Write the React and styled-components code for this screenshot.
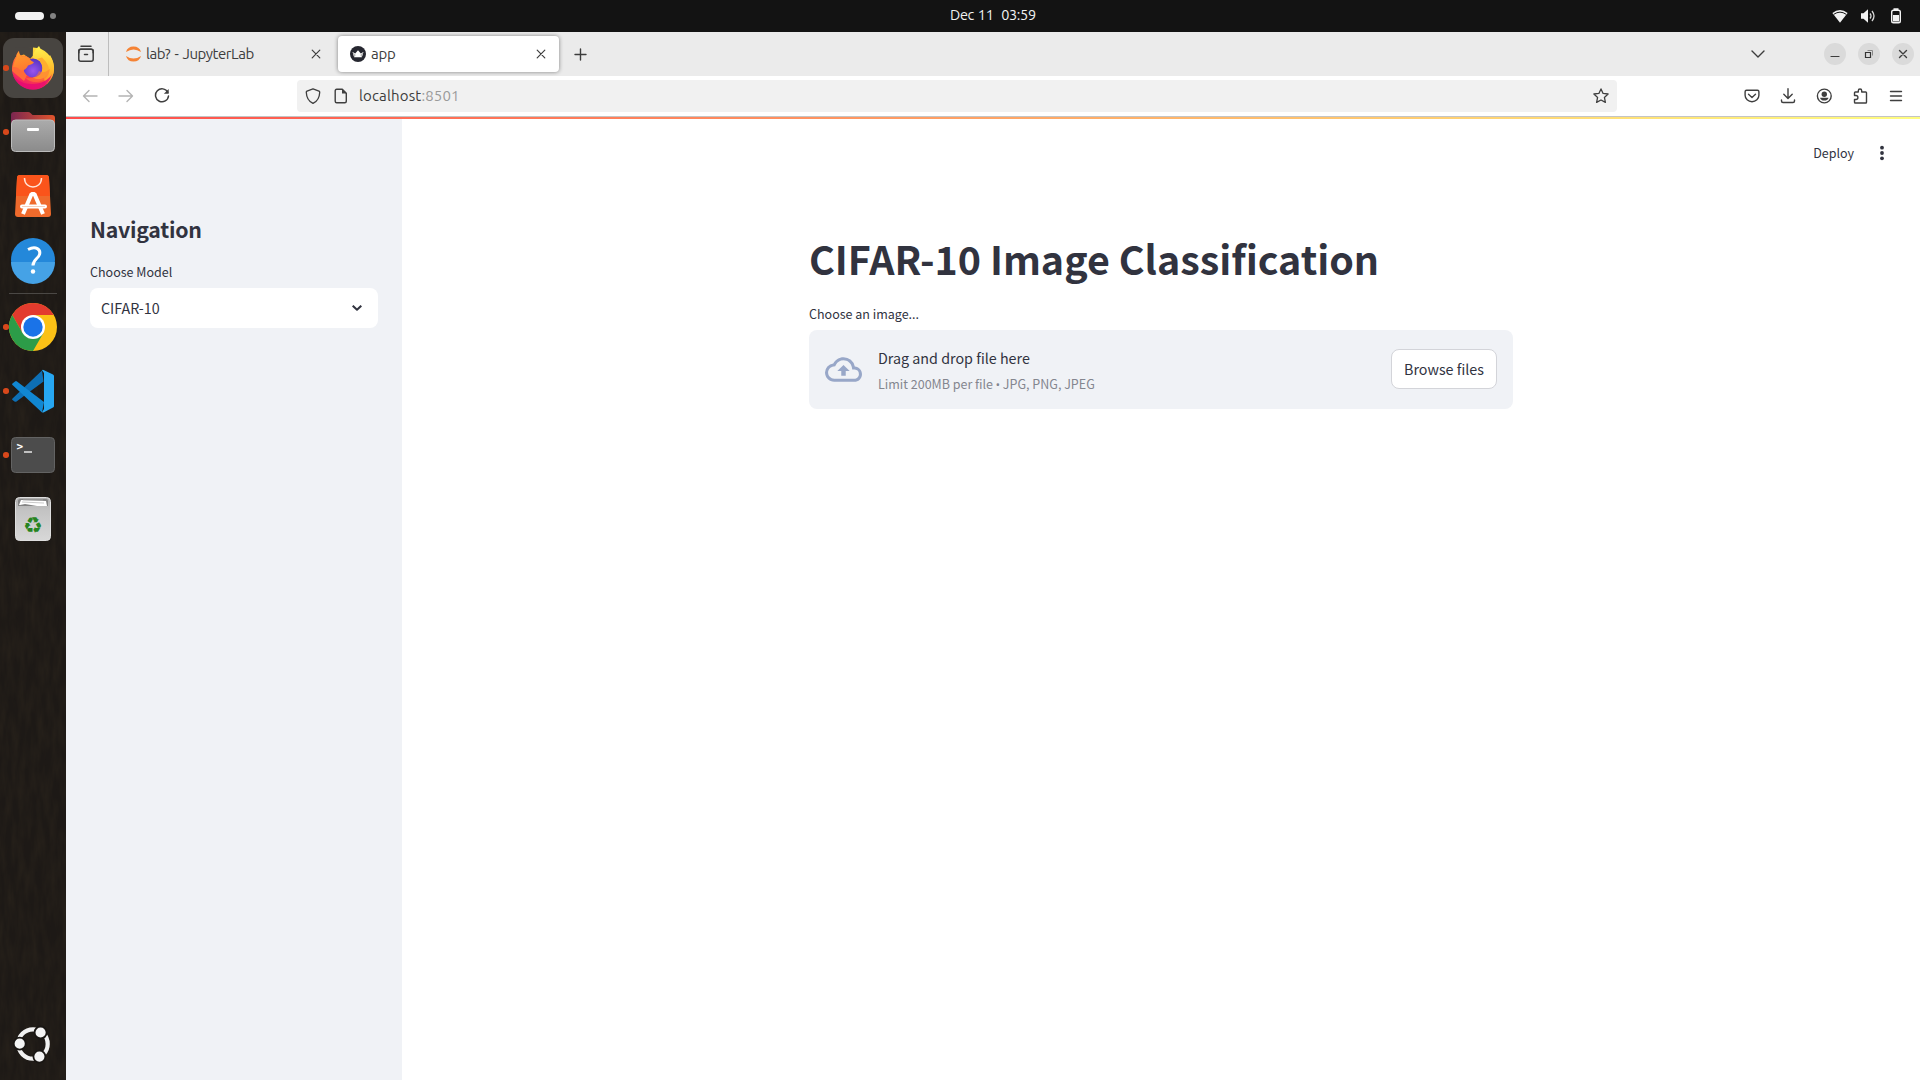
import React from "react";
import styled, { createGlobalStyle } from "styled-components";

const GlobalStyle = createGlobalStyle`
  *, *::before, *::after { box-sizing: border-box; }
  html, body { margin: 0; padding: 0; overflow: hidden; background: #fff; }
  svg { display: block; flex: none; }
  button { margin: 0; padding: 0; border: 0; background: none; color: inherit; font: inherit; }
`;

const uiFont = `"Ubuntu", "Noto Sans", "Open Sans", sans-serif`;
const pageFont = `"Source Sans Pro", "Noto Sans CJK SC", "Noto Sans", sans-serif`;

const Desktop = styled.div`
  width: 1920px;
  height: 1080px;
  display: flex;
  flex-direction: column;
  font-family: ${uiFont};
`;

/* ---------- system panel ---------- */
const Panel = styled.header`
  height: 32px;
  flex: none;
  background: #131313;
  color: #f2f2f2;
  display: grid;
  grid-template-columns: 950px 1fr auto;
  align-items: center;
`;
const Workspaces = styled.div`
  display: flex;
  align-items: center;
  gap: 6px;
  padding-left: 15px;
`;
const Pill = styled.span`
  width: ${(p) => (p.$active ? 29 : 6)}px;
  height: ${(p) => (p.$active ? 8 : 6)}px;
  border-radius: 4px;
  background: ${(p) => (p.$active ? "#f2f2f2" : "#828282")};
`;
const Clock = styled.span`
  font-size: 14.5px;
  line-height: 30px;
  padding-bottom: 2px;
  white-space: pre;
  letter-spacing: -0.35px;
  word-spacing: 0.9px;
`;
const Tray = styled.div`
  display: flex;
  align-items: center;
  gap: 12px;
  padding-right: 16px;
`;

/* ---------- dock ---------- */
const Body = styled.div`
  flex: 1;
  display: flex;
  min-height: 0;
`;
const DockBar = styled.nav`
  position: relative;
  width: 66px;
  flex: none;
  padding: 6px 3px;
  background: #1d1916;
  display: flex;
  flex-direction: column;
  overflow: hidden;
`;
const Grain = styled.svg`
  position: absolute;
  inset: 0;
  width: 66px;
  height: 1048px;
`;
const Slot = styled.div`
  position: relative;
  width: 60px;
  height: 60px;
  flex: none;
  margin-bottom: ${(p) => (p.$last ? 0 : 4)}px;
  margin-top: ${(p) => (p.$last ? "auto" : 0)};
  border-radius: 11px;
  background: ${(p) => (p.$active ? "#484541" : "transparent")};
  &::before {
    content: "";
    display: ${(p) => (p.$running ? "block" : "none")};
    position: absolute;
    left: 0;
    top: 27px;
    width: 5.5px;
    height: 5.5px;
    border-radius: 50%;
    background: #d8481b;
  }
`;
const DockRule = styled.hr`
  position: relative;
  width: 48px;
  height: 1px;
  flex: none;
  margin: -1px 6px 3px;
  border: 0;
  background: #4b4845;
`;

/* ---------- browser ---------- */
const Browser = styled.section`
  flex: 1;
  display: flex;
  flex-direction: column;
  min-width: 0;
`;
const TabStrip = styled.div`
  height: 44px;
  flex: none;
  background: #ebebeb;
  display: flex;
  align-items: center;
  color: #3d3d3d;
`;
const Overview = styled.div`
  width: 43px;
  height: 44px;
  flex: none;
  display: flex;
  align-items: center;
  padding-left: 11px;
  border-right: 1px solid #bdbdbd;
`;
const Tab = styled.div`
  width: 221px;
  height: 36px;
  margin-left: 4px;
  padding: 0 13px 0 12px;
  display: flex;
  align-items: center;
  border-radius: 4px;
  background: ${(p) => (p.$active ? "#fff" : "transparent")};
  box-shadow: ${(p) => (p.$active ? "0 0 4px rgba(0,0,0,0.45)" : "none")};
`;
const TabTitle = styled.span`
  flex: 1;
  margin-left: ${(p) => p.$gap}px;
  font-size: 15px;
  line-height: 20px;
  letter-spacing: ${(p) => p.$track}px;
  word-spacing: 1.2px;
  white-space: nowrap;
`;
const NewTab = styled.button`
  margin-left: 15px;
  height: 13px;
`;
const WindowControls = styled.div`
  margin-left: auto;
  display: flex;
  align-items: center;
  gap: 12px;
  padding-right: 6px;
`;
const ListTabs = styled.button`
  margin-right: 47px;
`;
const RoundButton = styled.button`
  width: 22px;
  height: 22px;
  border-radius: 50%;
  background: #dadada;
  display: grid;
  place-items: center;
`;
const Toolbar = styled.div`
  height: 41px;
  flex: none;
  background: #fff;
  border-bottom: 1px solid #c4c4c4;
  display: flex;
  align-items: center;
  color: #3f3f3f;
`;
const NavButtons = styled.div`
  width: 231px;
  display: flex;
  gap: 20px;
  padding-left: 16px;
`;
const UrlBar = styled.div`
  width: 1320px;
  height: 32px;
  border-radius: 4px;
  background: #f1f1f1;
  display: flex;
  align-items: center;
  gap: 12px;
  padding: 0 8px;
`;
const Address = styled.span`
  flex: 1;
  margin-left: -2px;
  font-size: 15px;
  line-height: 20px;
  letter-spacing: 0.15px;
  color: #3c3c3c;
`;
const Port = styled.span`
  color: #9a9a9a;
`;
const Actions = styled.div`
  margin-left: auto;
  display: flex;
  gap: 20px;
  padding-right: 16px;
`;

/* ---------- page ---------- */
const Rainbow = styled.div`
  height: 2px;
  flex: none;
  background: linear-gradient(90deg, #ff4b4b, #fffd80);
`;
const Page = styled.div`
  flex: 1;
  display: flex;
  min-height: 0;
  font-family: ${pageFont};
  color: #31333f;
`;
const Sidebar = styled.aside`
  width: 336px;
  flex: none;
  background: #f0f2f6;
  padding: 91px 24px 0;
`;
const SideTitle = styled.h2`
  margin: 0;
  font-size: 21.3px;
  font-weight: 700;
  line-height: 38px;
  letter-spacing: -0.25px;
`;
const Label = styled.label`
  display: block;
  font-size: 12.5px;
  line-height: 22px;
  margin-top: ${(p) => p.$top}px;
  white-space: nowrap;
`;
const Select = styled.div`
  height: 40px;
  margin-top: 5px;
  padding: 0 16px 0 11px;
  border-radius: 8px;
  background: #fff;
  display: flex;
  align-items: center;
  justify-content: space-between;
`;
const SelectValue = styled.span`
  font-size: 14.3px;
  padding-bottom: 2px;
`;
const Main = styled.main`
  flex: 1;
  display: flex;
  flex-direction: column;
  align-items: center;
`;
const AppHeader = styled.div`
  align-self: stretch;
  height: 68px;
  display: flex;
  justify-content: flex-end;
  align-items: center;
  gap: 26px;
  padding-right: 36px;
`;
const Deploy = styled.button`
  font-size: 12.5px;
  line-height: 20px;
`;
const Block = styled.div`
  width: 704px;
  padding-top: 43px;
`;
const Title = styled.h1`
  margin: 0;
  font-size: 39.4px;
  font-weight: 700;
  line-height: 56px;
  white-space: nowrap;
`;
const Uploader = styled.div`
  height: 79px;
  margin-top: 5px;
  padding: 0 16px 1px;
  border-radius: 8px;
  background: #f0f2f6;
  display: flex;
  align-items: center;
`;
const DropText = styled.div`
  flex: 1;
  margin-left: 16px;
  padding-top: 3px;
`;
const DropMain = styled.div`
  font-size: 14.3px;
  line-height: 26px;
`;
const DropHint = styled.div`
  margin-top: 1px;
  font-size: 12.5px;
  line-height: 24px;
  color: #84868f;
`;
const Bullet = styled.span`
  font-family: Roboto, sans-serif;
  font-size: 12.5px;
  line-height: 1;
`;
const BrowseButton = styled.button`
  width: 106px;
  height: 40px;
  padding-bottom: 1px;
  border: 1px solid #d3d4d9;
  border-radius: 8px;
  background: #fff;
  font-size: 14.3px;
`;

const Line = ({ w = 16, h = 16, s = 1.4, children, ...rest }) => (
  <svg width={w} height={h} viewBox={`0 0 ${w} ${h}`} fill="none" stroke="currentColor" strokeWidth={s} strokeLinecap="round" strokeLinejoin="round" {...rest}>
    {children}
  </svg>
);
const Close = () => (
  <Line w={10} h={10} s={1.2}><path d="M1.200 1.200l7.600 7.600M8.800 1.200L1.200 8.800" /></Line>
);
const DockSvg = ({ children }) => <svg width="60" height="60" viewBox="0 0 60 60">{children}</svg>;

const Firefox = () => (
  <DockSvg>
    <defs>
      <linearGradient id="ffBody" x1="0.8" y1="0" x2="0.25" y2="1">
        <stop offset="0" stopColor="#fff14a" /><stop offset="0.35" stopColor="#ffb52b" /><stop offset="0.62" stopColor="#ff4f3c" /><stop offset="1" stopColor="#ea0a7b" />
      </linearGradient>
      <radialGradient id="ffGlobe" cx="0.5" cy="0.65" r="0.6">
        <stop offset="0" stopColor="#9a55ef" /><stop offset="1" stopColor="#5b35c5" />
      </radialGradient>
      <linearGradient id="ffHead" x1="0" y1="0" x2="0.3" y2="1">
        <stop offset="0" stopColor="#ffa32c" /><stop offset="1" stopColor="#ff7a30" />
      </linearGradient>
      <linearGradient id="ffTail" x1="0" y1="0" x2="0" y2="1">
        <stop offset="0" stopColor="#fff44f" /><stop offset="0.6" stopColor="#ffbd2d" /><stop offset="1" stopColor="#ff8a2d" />
      </linearGradient>
    </defs>
    <circle cx="30" cy="30.500" r="21" fill="url(#ffBody)" />
    <path d="M36 8c2 5 6 8 9.500 11l1.500-2c3 5 4.500 10 4 15-.5 6-4 11-8 14-4-8-2-14-7-20-3-3-6-5-6.500-8 1-4 3.500-7 6.500-10z" fill="url(#ffTail)" />
    <path d="M29.800 17.800L30 9l-18 1v9l9-2.500 6 4.500z" fill="#484541" />
    <path d="M9 33c0-6 2-10 4-14 0-2 1-4 3-6 0 3 1 4 3 5 4-1 6 1 10 4l-2 9-6 12z" fill="#ff6a38" />
    <circle cx="30" cy="30" r="9.500" fill="url(#ffGlobe)" />
    <path d="M34 21c3 1 5.500 5 5.500 9 0 5-4 9.500-9.500 9.500 7 4 14 0 16-7 0-6-4-10-7-13z" fill="#ffae2d" />
    <path d="M36 33c4 3 8 0 11-2-1 8-7 13-14 13-5 0-9-2-11-5 6 3 12 0 14-6z" fill="#ff7a34" opacity=".55" />
    <path d="M10 29c1-4 2-7 3.500-10 0-2 1-4 2.500-6 0 3 1 4.500 3 5.500 4-1 7 1 9 4l3 2c-2 2-4 2-6 3-1 3-4 5-7 5-3-3-5-4-8-3.500z" fill="url(#ffHead)" />
    <path d="M10 37c4 6 11 9 19 9 9 0 17-4 20-10-3 10-10 15.500-19 15.500S13 46 10 37z" fill="#e60a72" opacity=".85" />
  </DockSvg>
);
const Files = () => (
  <DockSvg>
    <defs>
      <linearGradient id="fTop" x1="0" x2="1"><stop offset="0" stopColor="#7a2650" /><stop offset="1" stopColor="#e2552c" /></linearGradient>
      <linearGradient id="fBody" x1="0" x2="0" y1="0" y2="1"><stop offset="0" stopColor="#ababab" /><stop offset="1" stopColor="#8b8b8b" /></linearGradient>
    </defs>
    <path d="M8 24V13q0-3 3-3h14q1.500 0 2.500 1l2 2H49q3 0 3 3v8z" fill="url(#fTop)" />
    <rect x="8.500" y="18" width="43" height="31.500" rx="4" fill="url(#fBody)" stroke="#bcbcbc" />
    <rect x="24" y="26" width="12" height="3" rx="1" fill="#fff" />
  </DockSvg>
);
const Store = () => (
  <DockSvg>
    <path d="M17 9h26q3 0 3 3l2 36q0 3-3 3H15q-3 0-3-3l2-36q0-3 3-3z" fill="#ef6a2c" />
    <path d="M17 9h26q3 0 3 3l.9 18H13.200L14 12q0-3 3-3z" fill="#fa541b" />
    <path d="M21.500 12c0 12 17 12 17 0" fill="none" stroke="#ffe4d6" strokeWidth="1.500" />
    <path d="M20 48l8.500-20h3L40 48" fill="none" stroke="#fff" strokeWidth="4" strokeLinejoin="bevel" />
    <path d="M19 40.500h23" stroke="#fff" strokeWidth="4" strokeLinecap="round" />
    <path d="M19 40.500h23" stroke="#f4b08e" strokeWidth=".6" />
  </DockSvg>
);
const Help = () => (
  <DockSvg>
    <circle cx="30" cy="30" r="22" fill="#2488da" />
    <path d="M8 32a22 22 0 0 0 44 0z" fill="#45a2e6" />
    <path d="M25 19.500c8-4 13 0 11.500 5-1 4-6.500 5-6.500 11" fill="none" stroke="#fff" strokeWidth="3" />
    <circle cx="30" cy="41.500" r="2.200" fill="#fff" />
  </DockSvg>
);
const Chrome = () => (
  <DockSvg>
    <circle cx="30" cy="30" r="24" fill="#fbc116" />
    <path d="M30 30V18h20.800A24 24 0 0 0 9.200 18L19.600 36z" fill="#e33b2e" />
    <path d="M9.200 18A24 24 0 0 0 30 54l10.400-18L30 30l-10.400 6z" fill="#2c9c48" />
    <circle cx="30" cy="30" r="12" fill="#fff" />
    <circle cx="30" cy="30" r="9.700" fill="#1a73e8" />
  </DockSvg>
);
const Code = () => (
  <DockSvg>
    <path d="M9.500 37.500L39 9.500l1.500 11-27 20q-1 .7-2 0l-2-1.500q-1-.700 0-1.500z" fill="#0d6fb5" />
    <path d="M9.500 22.500l2.500-2q1-.8 2 0L41 41l-2 10.500L9.500 24q-1-.700 0-1.500z" fill="#1187d2" />
    <path d="M39 9.200q.7-.6 1.500-.2L50 13.500q1 .5 1 1.500v30q0 1-1 1.500L40.500 51.500q-.800.300-1.500-.2l2-3.300V12z" fill="#27a7f2" />
  </DockSvg>
);
const PromptText = styled.text`
  font: 700 11px "DejaVu Sans Mono", monospace;
  fill: #fff;
`;
const Terminal = () => (
  <DockSvg>
    <rect x="8.500" y="12.500" width="43" height="35" rx="4" fill="#4c4c4c" stroke="#636363" />
    <PromptText x="13.500" y="24.500">&gt;</PromptText>
    <path d="M21 27h8" stroke="#fff" strokeWidth="1.300" />
  </DockSvg>
);
const RecycleGlyph = styled.text`
  font: 22px "DejaVu Sans", sans-serif;
  fill: #268420;
  text-anchor: middle;
`;
const Trash = () => (
  <DockSvg>
    <defs>
      <linearGradient id="tr" x1="0" x2="0" y1="0" y2="1"><stop offset="0" stopColor="#adadad" /><stop offset=".3" stopColor="#c3c3c3" /><stop offset="1" stopColor="#d8d8d8" /></linearGradient>
    </defs>
    <rect x="12.500" y="8.500" width="35" height="43" rx="4" fill="url(#tr)" stroke="#dedede" />
    <path d="M17 10h26q2 0 2 2v5H15v-5q0-2 2-2z" fill="#848484" />
    <path d="M16 16l2-5 25 1 1 5H34l-12-2-5 1z" fill="#fff" />
    <path d="M19 13l22 1M20 11h20" stroke="#b2b2b2" strokeWidth=".7" />
    <RecycleGlyph x="30" y="43.500">{"\u267B"}</RecycleGlyph>
  </DockSvg>
);
const Ubuntu = () => (
  <DockSvg>
    <circle cx="30" cy="30" r="14.700" fill="none" stroke="#f1f1f1" strokeWidth="4.200" />
    {[[37.6, 18.5], [16.7, 29.7], [36.4, 42.6]].map(([x, y]) => (
      <circle key={y} cx={x} cy={y} r="6" fill="#f4f4f4" stroke="#191613" strokeWidth="1.800" />
    ))}
  </DockSvg>
);

const dockItems = [
  { name: "firefox", Icon: Firefox, active: true, running: true },
  { name: "files", Icon: Files, running: true },
  { name: "store", Icon: Store },
  { name: "help", Icon: Help },
  null,
  { name: "chrome", Icon: Chrome, running: true },
  { name: "code", Icon: Code, running: true },
  { name: "terminal", Icon: Terminal, running: true },
  { name: "trash", Icon: Trash },
];

const Dock = () => (
  <DockBar>
    <Grain aria-hidden="true">
      <filter id="wood" x="0" y="0" width="100%" height="100%" colorInterpolationFilters="sRGB">
        <feTurbulence type="fractalNoise" baseFrequency="0.16 0.035" numOctaves="3" seed="7" />
        <feColorMatrix values="0 0 0 0 0.19  0 0 0 0 0.16  0 0 0 0 0.12  1.4 0 0 0 -0.4" />
      </filter>
      <rect width="66" height="1048" filter="url(#wood)" opacity=".55" />
    </Grain>
    {dockItems.map((item) =>
      item ? (
        <Slot key={item.name} $active={item.active} $running={item.running}><item.Icon /></Slot>
      ) : (
        <DockRule key="rule" />
      )
    )}
    <Slot $last><Ubuntu /></Slot>
  </DockBar>
);

export default function App() {
  return (
    <>
      <GlobalStyle />
      <Desktop>
        <Panel>
          <Workspaces><Pill $active /><Pill /></Workspaces>
          <Clock>{"Dec 11  03:59"}</Clock>
          <Tray>
            <svg width="16" height="16" viewBox="0 0 16 16"><path d="M.4 5Q8-1 15.600 5L8 14.800z" fill="#f2f2f2" /><path d="M1.800 6.300Q8 2 14.200 6.300" fill="none" stroke="#131313" strokeWidth="1" /></svg>
            <svg width="16" height="16" viewBox="0 0 16 16"><path d="M1 5.200h2.500L8 1.200v13.600l-4.500-4H1z" fill="#f2f2f2" /><path d="M10 5.500q2 2.500 0 5M12 3q4 5 0 10" fill="none" stroke="#d8d8d8" strokeWidth="1.300" /></svg>
            <svg width="16" height="16" viewBox="0 0 16 16"><rect x="3.700" y="2.200" width="8.600" height="12.600" rx="1.800" fill="none" stroke="#f2f2f2" strokeWidth="1.400" /><path d="M5.500.2h5v2h-5zM5 7h6v6.500H5z" fill="#f2f2f2" /></svg>
          </Tray>
        </Panel>
        <Body>
          <Dock />
          <Browser>
            <TabStrip>
              <Overview>
                <Line w={18} h={18} s={1.5}><path d="M4 1.200h10" /><rect x="1.800" y="4.200" width="14.400" height="12" rx="2" /><path d="M1.800 7.800v-1.500q0-2 2-2h10.400q2 0 2 2v1.500M7.500 9.500h3" /></Line>
              </Overview>
              <Tab>
                <svg width="17" height="16" viewBox="0 0 17 16" fill="#f58335"><path d="M1 6Q2.500.5 8.500.5T16 6Q8.500.8 1 6zM1 10q7.500 5.200 15 0-1.500 5.500-7.500 5.500T1 10z" /></svg>
                <TabTitle $gap={4} $track={-0.45}>lab? - JupyterLab</TabTitle>
                <Close />
              </Tab>
              <Tab $active>
                <svg width="16" height="16" viewBox="0 0 16 16"><circle cx="8" cy="8" r="8" fill="#262730" /><path d="M2.600 6l2.600 1.500L8 4.200l2.800 3.300L13.400 6l-1.600 5.200H4.200z" fill="#fff" /><path d="M4.200 11.200L2.600 6l3.200 3zM11.800 11.200L13.400 6l-3.200 3z" fill="#bbb" /></svg>
                <TabTitle $gap={5} $track={-0.3}>app</TabTitle>
                <Close />
              </Tab>
              <NewTab><Line w={13} h={13} s={1.4}><path d="M6.500 1v11M1 6.500h11" /></Line></NewTab>
              <WindowControls>
                <ListTabs><Line w={14} h={8} s={1.4}><path d="M1 1l6 6 6-6" /></Line></ListTabs>
                <RoundButton><Line w={10} h={10} s={1.2}><path d="M1 7.500h8" /></Line></RoundButton>
                <RoundButton><svg width="10" height="10" viewBox="0 0 10 10" fill="none"><path d="M1.500 3.500h5v5h-5z" stroke="#333" strokeWidth="1.200" /><path d="M3.500 1.500h5v5" stroke="#888" /></svg></RoundButton>
                <RoundButton><Line w={10} h={10} s={1.4}><path d="M1.500 1.500l7 7M8.500 1.500l-7 7" /></Line></RoundButton>
              </WindowControls>
            </TabStrip>
            <Toolbar>
              <NavButtons>
                <Line color="#b4b4b4"><path d="M15 8H1.500M7 2.500L1.500 8 7 13.500" /></Line>
                <Line color="#b4b4b4"><path d="M1 8h13.500M9 2.500L14.500 8 9 13.500" /></Line>
                <Line s={1.5}><path d="M13.800 4.300A6.500 6.500 0 1 0 14.500 8" /><path d="M14.700 1v4.800H9.900z" fill="currentColor" stroke="none" /></Line>
              </NavButtons>
              <UrlBar>
                <Line s={1.3}><path d="M8 .8l6 2.400q.8.3.7 1.200-.3 7.800-6.700 11Q1.600 12.200 1.300 4.400q-.1-.9.7-1.200z" /></Line>
                <Line s={1.4}><path d="M3.700 1.300h5.600l4 4v7.900q0 1.500-1.500 1.500H3.700q-1.500 0-1.500-1.500V2.800q0-1.500 1.500-1.500z" /><path d="M9 1v4.500h4.500z" fill="currentColor" stroke="none" /></Line>
                <Address>localhost<Port>:8501</Port></Address>
                <Line s={1.3}><path d="M8 .9l2.100 4.500 5 .6-3.700 3.400 1 5L8 12l-4.400 2.400 1-5L.9 6l5-.6z" /></Line>
              </UrlBar>
              <Actions>
                <Line s={1.4}><path d="M2.500 2.300h11q1.400 0 1.400 1.400v3.600a6.900 6.400 0 0 1-13.800 0V3.700q0-1.400 1.400-1.400zM4.500 6.300L8 9.400l3.500-3.100" /></Line>
                <Line s={1.4}><path d="M8 .8v9.500M3.800 6.300L8 10.500l4.200-4.200M1.500 12v1q0 1.500 1.500 1.500h10q1.500 0 1.500-1.500v-1" /></Line>
                <Line s={1.4}><circle cx="8.300" cy="8" r="6.900" /><circle cx="8.300" cy="6.200" r="2.700" fill="currentColor" stroke="none" /><path d="M4.100 9.700h8.400q-.5 2.800-4.200 2.800t-4.200-2.800z" fill="currentColor" stroke="none" /></Line>
                <Line s={1.4}><path d="M2.500 6.500V4.800q0-.8.8-.8h3V2.700a1.700 1.700 0 0 1 3.400 0V4h4q.8 0 .8.800v9.400q0 .8-.8.800H3.300q-.8 0-.8-.8v-2.700h1.400a2 2 0 0 0 0-4H2.500z" /></Line>
                <Line s={1.4}><path d="M2.500 3.500h11M2.500 8h11M2.500 12.500h11" /></Line>
              </Actions>
            </Toolbar>
            <Rainbow />
            <Page>
              <Sidebar>
                <SideTitle>Navigation</SideTitle>
                <Label $top={13}>Choose Model</Label>
                <Select>
                  <SelectValue>CIFAR-10</SelectValue>
                  <Line w={10} h={6} s={2} strokeLinecap="butt"><path d="M.7.700L5 4.700 9.300.7" /></Line>
                </Select>
              </Sidebar>
              <Main>
                <AppHeader>
                  <Deploy>Deploy</Deploy>
                  <svg width="4" height="16" viewBox="0 0 4 16" fill="#31333f"><circle cx="2" cy="2.700" r="1.900" /><circle cx="2" cy="8" r="1.900" /><circle cx="2" cy="13.300" r="1.900" /></svg>
                </AppHeader>
                <Block>
                  <Title>CIFAR-10 Image Classification</Title>
                  <Label $top={17}>Choose an image...</Label>
                  <Uploader>
                    <svg width="37" height="37" viewBox="0 0 24 24" fill="#98a7c8"><path d="M19.350 10.040A7.490 7.490 0 0 0 12 4C9.110 4 6.600 5.640 5.350 8.040A5.994 5.994 0 0 0 0 14c0 3.310 2.690 6 6 6h13c2.760 0 5-2.240 5-5 0-2.640-2.050-4.780-4.650-4.960zM19 18H6c-2.210 0-4-1.790-4-4 0-2.050 1.530-3.760 3.560-3.970l1.070-.11.5-.95A5.469 5.469 0 0 1 12 6c2.620 0 4.880 1.860 5.390 4.430l.3 1.500 1.530.11A2.980 2.980 0 0 1 22 15c0 1.650-1.350 3-3 3zM8 13h2.550v3h2.900v-3H16l-4-4z" /></svg>
                    <DropText>
                      <DropMain>Drag and drop file here</DropMain>
                      <DropHint>Limit 200MB per file <Bullet>•</Bullet> JPG, PNG, JPEG</DropHint>
                    </DropText>
                    <BrowseButton>Browse files</BrowseButton>
                  </Uploader>
                </Block>
              </Main>
            </Page>
          </Browser>
        </Body>
      </Desktop>
    </>
  );
}
